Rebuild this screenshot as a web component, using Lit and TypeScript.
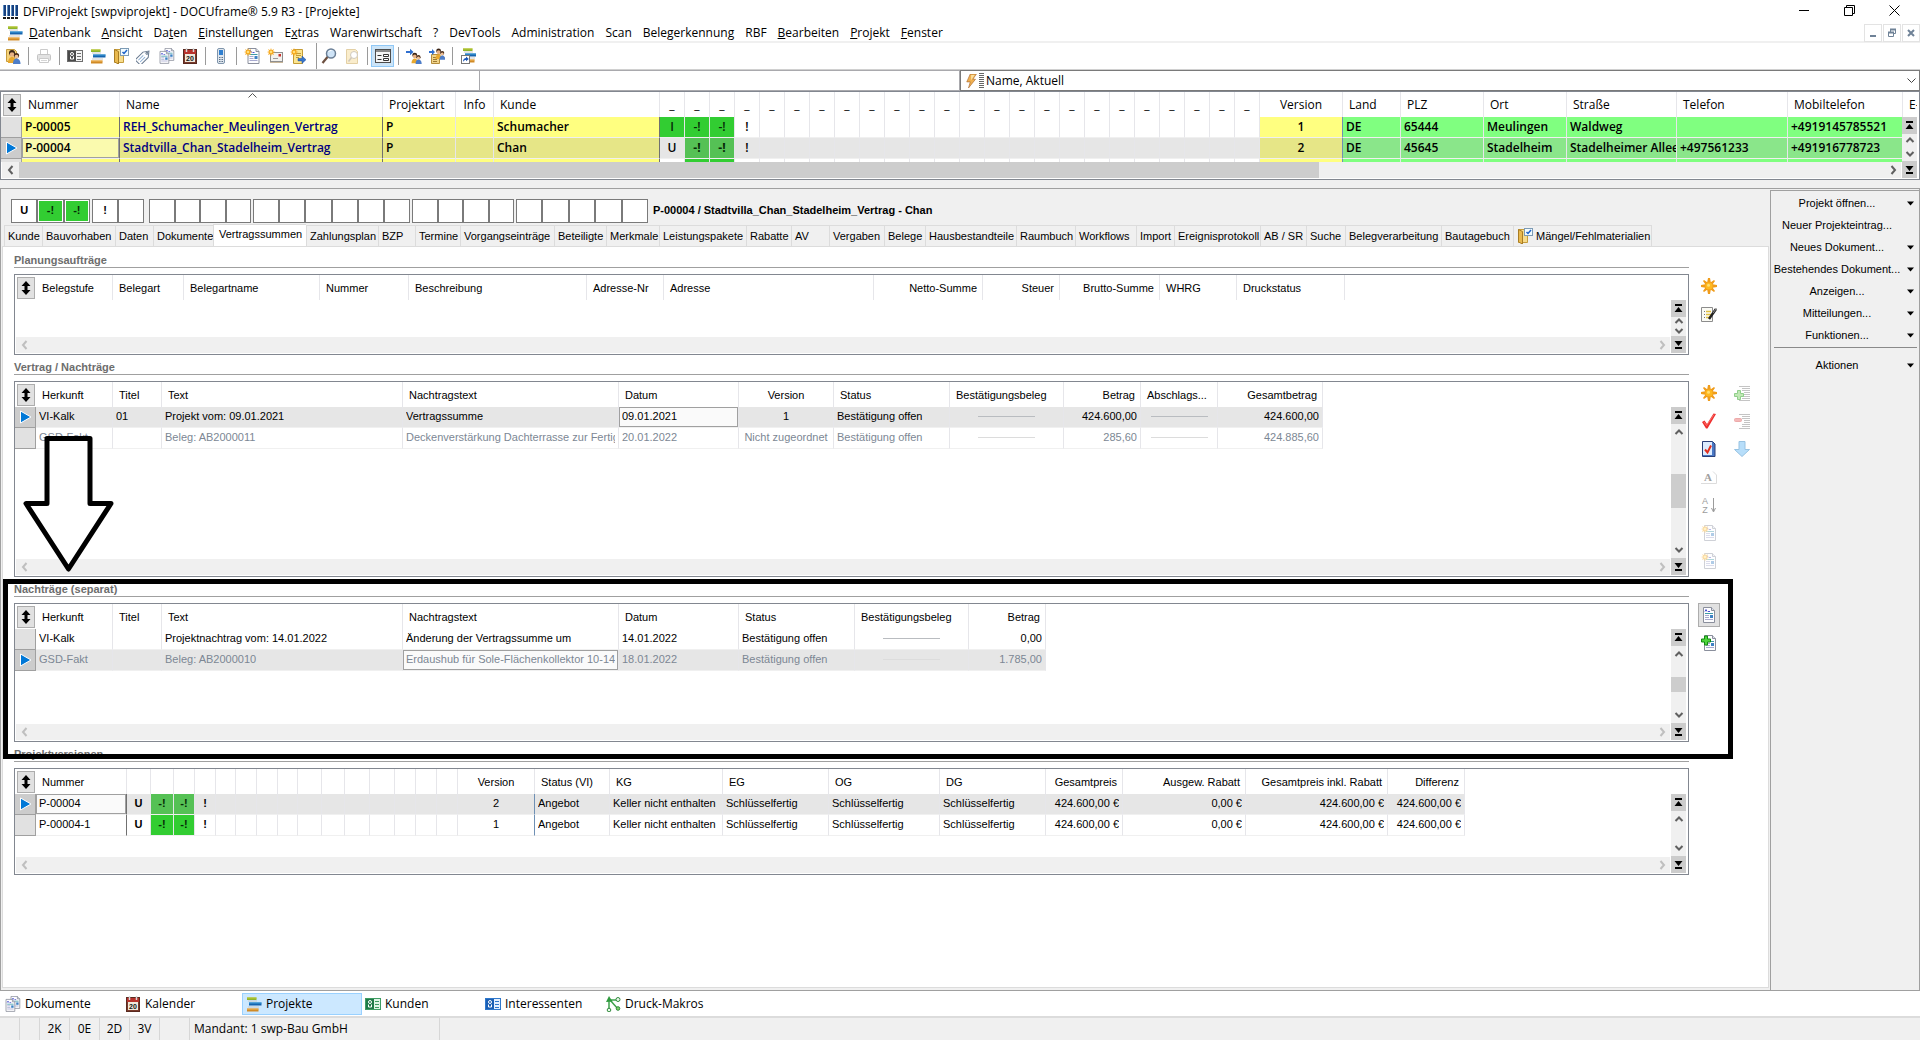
import { LitElement, html, svg, css, nothing, TemplateResult } from "lit";
import { customElement, property } from "lit/decorators.js";
import { classMap } from "lit/directives/class-map.js";

/* ---------- icons (16 x 16 grid) ---------- */

const sheet = svg`
  <path d="M2.500 .5h8l3 3v12h-11z" fill="#fdfdff" stroke="#8a8f9c"/>
  <path d="M10.500 .5v3h3" fill="#dfe3ee" stroke="#8a8f9c"/>
  <path d="M4 4.500l1-2 1 2M7 4.500h2" stroke="#4a4fd0" fill="none"/>
  <path d="M4 6.500h8" stroke="#3f9aa8"/><path d="M4 8.500h4M4 10.500h4M4 12.500h8" stroke="#a7a9cf"/>
  <rect x="9" y="8" width="3" height="3" fill="#3d82c4"/>`;
const smallStar = svg`<path d="M4 0l.8 2.200L7 1l-1 2.200L8.400 4 6 4.800 7 7 4.800 6 4 8.400 3.200 6 1 7l1-2.200L0 4l2.200-.8L1 1l2.200 1.200z" fill="#f7a81b"/><circle cx="4" cy="4" r="1.300" fill="#ffe07a"/>`;
const person = svg`
  <circle cx="7" cy="5" r="3" fill="#3a2416"/><circle cx="7" cy="6.500" r="2.300" fill="#e7b184"/>
  <path d="M3 15c0-4 2-6 4-6s4 2 4 6z" fill="#e9a92e"/>
  <circle cx="11.500" cy="7.500" r="2.600" fill="#4c2d18"/><circle cx="11.500" cy="8.700" r="1.900" fill="#f0c096"/>
  <path d="M8 16c0-4 1.700-5.500 3.500-5.500S15.500 12 15.500 16z" fill="#4d7dc8"/>`;
const bars = svg`
  <path d="M1 1.500h9.500v2.500H1z" fill="#8cb52c"/><path d="M1 1.500h9.500v1H1z" fill="#c2c832"/>
  <path d="M2 5h9" stroke="#c9c9c9"/><path d="M3 6.500h12.500v3H3z" fill="#1664ae"/><path d="M3 6.500h12.500v1H3z" fill="#3fa0dc"/>
  <path d="M2 11h11" stroke="#c9c9c9"/><path d="M1 12.500h11.500v3H1z" fill="#d08a26"/><path d="M1 12.500h11.500v1H1z" fill="#f2b95a"/>`;
const card = (bg: string, edge: string, left: string) => svg`
  <rect x=".5" y="2.500" width="15" height="11" fill=${bg} stroke=${edge}/>
  <rect x="1" y="3" width="8" height="10" fill=${left}/>
  <circle cx="5" cy="6" r="1.500" fill="none" stroke="#fff"/><path d="M3.500 8.500v2.500h3V8.500" fill="none" stroke="#fff"/>
  <path d="M10 5.500h4M10 8.500h4M10 11.500h4" stroke=${edge}/>`;
const lines = svg`<path d="M5 1.500h11M8 3.500h8M8 5.500h8M10 7.500h6M10 9.500h6M8 11.500h8M8 13.500h8M5 15.500h11" stroke="#c4c4c4"/>`;

const ICONS: Record<string, unknown> = {
  app: svg`<path d="M1 1h3v11H1zM5 1h3v11H5zM9 1h3v11H9zM13 1h3v11h-3z" fill="#17407e"/><path d="M1 1h1v11H1zM5 1h1v11H5zM9 1h1v11H9zM13 1h1v11h-1z" fill="#5f8fc4"/><path d="M1 13h3v2H1zM5 13h3v2H5zM9 13h3v2H9zM13 13h3v2h-3z" fill="#1c1c1c"/>`,
  bars,
  people: svg`<path d="M1.500 1.500h8l2 2v10h-10z" fill="#f5d27a" stroke="#c49a3c"/>${person}`,
  printer: svg`<g opacity=".6"><path d="M4.500 1.500h7v5h-7z" fill="#fff" stroke="#aaa"/><rect x="1.500" y="6.500" width="13" height="6" rx="1" fill="#cfcfcf" stroke="#9d9d9d"/><path d="M3.500 10.500h9v4h-9z" fill="#fff" stroke="#aaa"/><path d="M5 12.500h6" stroke="#bbb"/></g>`,
  card: card("#f4f4f4", "#6e6e6e", "#4a4a4a"),
  kunden: card("#dff5e6", "#3f9c63", "#1f7a48"),
  interessenten: card("#e4f0ff", "#2f78cc", "#1b5fb4"),
  folder: svg`<path d="M1.500 1.500h9v13h-9z" fill="#f7dc8c" stroke="#c59c3c"/><path d="M1.500 1.500l4 2v12.500l-4-2z" fill="#e9b94e" stroke="#a97d24"/><rect x="7.500" y=".5" width="8" height="7" fill="#f2fbff" stroke="#7d9bb5"/><path d="M9.500 4l1.500 1.500L14 2" fill="none" stroke="#1c62c8" stroke-width="1.500"/>`,
  tag: svg`<g transform="rotate(-45 8 8)" fill="#fff" stroke="#6a7b90"><path d="M-1 4.500h11l5 3.500-5 4H-1z"/><circle cx="12" cy="8.100" r="1"/><path d="M1 7h7M1 9.500h7" stroke="#8fb0d4"/></g>`,
  docs: svg`<g transform="translate(4 0) scale(.8)">${sheet}</g><g transform="translate(-1 3) scale(.8)">${sheet}</g>`,
  cal: svg`<rect x="1.500" y="1.500" width="13" height="14" fill="#7a3b2c" stroke="#5a2a20"/><rect x="2" y="2" width="12" height="4" fill="#b8322c"/><path d="M4.500 0v4M11.500 0v4" stroke="#d9d9d9" stroke-width="1.500"/><rect x="3" y="6" width="10" height="8" fill="#efe9dc"/><text x="8" y="13" font-size="7" font-weight="700" font-family="Liberation Sans, sans-serif" text-anchor="middle" fill="#111">20</text>`,
  phone: svg`<rect x="4.500" y=".5" width="7" height="15" rx="1.500" fill="#dfe6ee" stroke="#7f95ac"/><rect x="6" y="2" width="4" height="5" fill="#2f7fd0"/><path d="M6 9.500h1M7.500 9.500h1M9 9.500h1M6 11.500h1M7.500 11.500h1M9 11.500h1M6 13.500h1M7.500 13.500h1M9 13.500h1" stroke="#5d7288"/>`,
  newdoc: svg`<g transform="translate(1.500 0)">${sheet}</g>${smallStar}`,
  mail: svg`<rect x="3.500" y="4.500" width="12" height="9" fill="#f2f1ee" stroke="#8f8f8f"/><path d="M3 14.500h13" stroke="#c9b79a"/><rect x="11.500" y="6" width="2.500" height="2.500" fill="#c8322b"/><path d="M6 10.500h5" stroke="#9a9a9a"/>${smallStar}`,
  note: svg`<path d="M3.500 1.500h9v14h-9z" fill="#fbe591" stroke="#c59c35"/><path d="M6 5.500h5M6 7.500h5M6 9.500h3" stroke="#c59c35"/><path d="M8 10.500h4V8l4 3.700-4 3.700v-2.500H8z" fill="#3776cc" stroke="#1d4f9a" stroke-width=".5"/>${smallStar}`,
  find: svg`<circle cx="10" cy="5.500" r="4.500" fill="#cfe4f7" stroke="#6b7f96" stroke-width="1.500"/><path d="M7.500 4a3 3 0 0 1 3-1.500" stroke="#fff" fill="none"/><path d="M6.500 9L1.500 15" stroke="#6d5040" stroke-width="2.200"/>`,
  findfolder: svg`<g opacity=".5"><path d="M2.500 1.500h9l2 2v12h-11z" fill="#f7dc9a" stroke="#c9a24e"/><circle cx="10" cy="7" r="3.500" fill="#fff" stroke="#a3957c"/><path d="M7.500 9.500l-3 4" stroke="#a3957c" stroke-width="1.500"/></g>`,
  form: svg`<rect x=".5" y="1.500" width="15" height="13" fill="#f5f5f5" stroke="#4d4d4d"/><path d="M1 3h14" stroke="#8a8a8a" stroke-width="2"/><path d="M2.500 7.500h4M2.500 11.500h4" stroke="#333"/><path d="M8.500 6.500h5v2h-5zM8.500 10.500h5v2h-5z" fill="#fff" stroke="#333"/>`,
  persons: svg`<g transform="translate(3 3) scale(.82)">${person}</g><path d="M0 3h4V.8L7.500 4 4 7.200V5H0z" fill="#2f6fd0"/>`,
  persons2: svg`<path d="M2.500 6.500h8v9h-8z" fill="#f1d48a" stroke="#b58d3c"/><path d="M4 9.500h4M4 11.500h4M4 13.500h4" stroke="#9d7a33"/><g transform="translate(4 -1) scale(.8)">${person}</g><path d="M0 3h3V1l3 3-3 3V5H0z" fill="#2f6fd0"/>`,
  shortcut: svg`<g transform="translate(2 -1)">${bars}</g><rect x="1.500" y="7.500" width="8" height="8" fill="#fff" stroke="#777"/><path d="M3 14c0-3 1.500-4 3-4V8.500L8.800 11 6 13.300V12c-1.500 0-2 .5-3 2z" fill="#1a57b8"/>`,
  bolt: svg`<path d="M6 0h7L9 6h3L4 16l2-7H2z" fill="#f0b050" stroke="#a4622a" stroke-width=".7"/><path d="M7 1h4L7 7z" fill="#fbe1a0"/>`,
  star: svg`<path d="M7 0h2l.8 4.300L13 2l1 1-2.300 3.200L16 7v2l-4.300.8L14 13l-1 1-3.200-2.300L9 16H7l-.8-4.300L3 14l-1-1 2.300-3.200L0 9V7l4.300-.8L2 3l1-1 3.200 2.300z" fill="#f09c1a"/><circle cx="8" cy="8" r="3.600" fill="#ffb91f"/><circle cx="7.500" cy="7.300" r="1.500" fill="#ffdf70"/>`,
  edit: svg`<path d="M.5 1.500h11v14H.5z" fill="#fbfbf5" stroke="#8c8c8c"/><path d="M3 5.500h1M3 8.500h1M3 11.500h1" stroke="#777"/><path d="M5 5.500h5M5 8.500h5M5 11.500h4" stroke="#e2c040" stroke-width="1.500"/><path d="M15 3L8 13" stroke="#222" stroke-width="2.500"/><path d="M15.500 2.300L12 7" stroke="#8b8b8b"/>`,
  check: svg`<path d="M1 9l2.500-1.500L6 11 12.500.5 15 1 6.500 15.500H5z" fill="#ee2f2f"/><path d="M3 9l2.500 3.500L13 1.500" stroke="#ff8a80" fill="none" stroke-width=".7"/>`,
  doccheck: svg`<path d="M1.500 .5h10l2.500 2.500v12.500H1.500z" fill="#4a78c4" stroke="#2a3f78"/><path d="M2 1h9v13H2z" fill="#dcecff"/><path d="M4 8.500l2.500 3L10 4.500" stroke="#e2301f" stroke-width="2" fill="none"/>`,
  adoc: svg`<path d="M0 14.500h15.500V6L12 2.500" fill="none" stroke="#dcdcdc"/><text x="7" y="12" font-size="11" font-weight="700" font-family="Liberation Serif, serif" text-anchor="middle" fill="#a0a0a0">A</text>`,
  az: svg`<text x="4" y="7" font-size="9" font-family="Liberation Sans, sans-serif" text-anchor="middle" fill="#9c9c9c">A</text><text x="4" y="16" font-size="9" font-family="Liberation Sans, sans-serif" text-anchor="middle" fill="#9c9c9c">Z</text><path d="M12.500 1v13M10.500 11l2 4 2-4" fill="none" stroke="#9c9c9c"/>`,
  faded: svg`<g opacity=".4"><g transform="translate(1 0)">${sheet}</g>${smallStar}</g>`,
  listplus: svg`${lines}<path d="M3.500 7.500h3v3h3v3h-3v3h-3v-3h-3v-3h3z" transform="translate(0 -2)" fill="#c0e8b4" stroke="#8fcf8a"/>`,
  listminus: svg`${lines}<rect x=".5" y="5.500" width="7" height="3" rx="1" fill="#f4b8b8" stroke="#ecaaaa"/>`,
  down: svg`<path d="M5 .5h6v8h4.500L8 15.500.5 8.500H5z" fill="#b7defa" stroke="#97c2e2"/>`,
  doc: svg`${sheet}`,
  docplus: svg`<g transform="translate(1 0)">${sheet}</g><path d="M3.500 1h3v3h3v3h-3v3h-3V7h-3V4h3z" fill="#4fd43c" stroke="#128a12"/>`,
  makros: svg`<path d="M4 5v9M5 4l8 9M5.500 4H13" stroke="#3fa34d" stroke-width="1.500" fill="none"/><path d="M1 6l3-6 3.500 5.500z" fill="#2f9a3e"/><circle cx="13" cy="3.500" r="2" fill="#e9f7ea" stroke="#2f8a3c"/><circle cx="4" cy="14" r="1.800" fill="#e9f7ea" stroke="#2f8a3c"/><circle cx="13" cy="12.500" r="1.800" fill="#7fcf6a" stroke="#2f8a3c"/>`,
};

const icon = (name: string, size = 16) =>
  html`<svg class="ico" width=${size} height=${size} viewBox="0 0 16 16" aria-hidden="true">${ICONS[name]}</svg>`;

const chevron = (dir: "up" | "down" | "left" | "right") => {
  const d = {
    up: "M1.500 6L5 2.500 8.500 6",
    down: "M1.500 3L5 6.500 8.500 3",
    left: "M6.500 1L3 5l3.500 4",
    right: "M3.500 1L7 5 3.500 9",
  }[dir];
  return html`<svg width="10" height="10" viewBox="0 0 10 10" aria-hidden="true"><path d=${d} fill="none" stroke="currentColor" stroke-width="2"/></svg>`;
};

/* ---------- data grid ---------- */

interface Col {
  w: number;
  t?: string;
  align?: "r" | "c";
  edge?: "dark" | "blue";
  sorted?: boolean;
}
interface Cell {
  t?: string;
  c?: string;
  line?: boolean;
}
interface Row {
  current?: boolean;
  muted?: boolean;
  focus?: number;
  cells: (string | Cell)[];
}

@customElement("df-grid")
export class DfGrid extends LitElement {
  @property({ attribute: false }) cols: Col[] = [];
  @property({ attribute: false }) rows: Row[] = [];
  @property() label = "";
  @property({ type: Boolean }) thumb = false;
  @property({ type: Boolean, reflect: true }) main = false;

  static styles = css`
    :host {
      display: grid;
      grid-template-columns: minmax(0, 1fr) 15px;
      grid-template-rows: 25px minmax(0, 1fr) 16px;
      column-gap: 1px;
      padding: 0 2px 1px 0;
      box-sizing: border-box;
      border: 1px solid #828790;
      background: #fff;
      overflow: hidden;
      font: 11px/14px "Liberation Sans", Arial, sans-serif;
      color: #000;
    }
    :host([main]) {
      font: 12px/16px "Open Sans", "Noto Sans", sans-serif;
    }
    .view { grid-area: 1 / 1 / 3 / 3; overflow: hidden; }
    table { table-layout: fixed; border-collapse: separate; border-spacing: 0; }
    th, td {
      box-sizing: border-box;
      padding: 0 3px;
      overflow: hidden;
      white-space: nowrap;
      text-align: left;
      border-right: 1px solid #e6e6ea;
    }
    th { height: 25px; padding: 0 6px; font-weight: 400; }
    td { height: 21px; padding-bottom: 2px; border-bottom: 1px solid #f0f0f0; }
    :host([main]) td { padding-bottom: 0; font-weight: 600; }
    th:first-child { padding: 1px 1px 0 2px; border-right: 0; }
    td:first-child {
      padding: 0;
      background: #e1e1e1;
      border-right: 1px solid #a0a0a0;
      border-bottom: 1px solid #a0a0a0;
    }
    .r { text-align: right; }
    th.r { padding-right: 5px; }
    .c { text-align: center; padding-left: 0; padding-right: 0; }
    td.dark { border-right-color: #707070; }
    td.blue { border-right-color: #6f90b4; }
    .current td { background: #e6e6e6; }
    .current td:first-child { background: #ccc; }
    .muted td { color: #7c8794; }
    td.green, .current td.green { background: #32cd32; font-weight: 700; color: #062806; }
    .current td.green { background: #55c155; }
    td.bold { font-weight: 700; }
    .val { display: block; overflow: hidden; }
    :host([main]) .val { overflow: visible; }
    .sum { display: block; width: 57px; height: 1px; margin: 0 auto; background: #b9bcc0; }
    .muted .sum { background: #dcdcdc; }
    td.yel { background: #ffff80; }
    .current td.yel { background: #e6e687; }
    td.navy { color: #000080; }
    td.lime { background: #80ff80; }
    .current td.lime { background: #8ae68a; }
    .current td.focus { background: #fafafa; box-shadow: inset 0 0 0 1px #a0a0a0; }
    .current td.focus.yel { background: #fafaae; }
    .sortbtn {
      display: flex;
      align-items: center;
      justify-content: center;
      width: 18px;
      height: 22px;
      padding: 0;
      border: 1px solid #adadad;
      background: #e1e1e1;
    }
    .mark { display: block; margin: 0 auto; }
    .head { position: relative; overflow: visible; }
    .sortmark { position: absolute; top: 1px; left: 49%; }

    .hbar { grid-area: 3 / 1; display: flex; background: #f0f0f0; margin-left: 1px; }
    .vbar { grid-area: 2 / 2 / 4 / 3; display: flex; flex-direction: column; background: #f0f0f0; }
    .sb {
      display: flex;
      align-items: center;
      justify-content: center;
      flex: 0 0 17px;
      padding: 0;
      border: 0;
      background: transparent;
      color: #bfbfbf;
      overflow: hidden;
    }
    .vbar .sb { color: #606060; flex: 0 1 17px; min-height: 0; }
    .vbar .end { background: #ccc; color: #000; flex: 0 0 17px; }
    .track { flex: 1; display: grid; grid-template-columns: 23fr 10fr; min-height: 0; }
    .hthumb { background: #cdcdcd; }
    .vtrack { flex: 1 1 0; min-height: 0; display: grid; grid-template-rows: 1fr 1fr 1fr; }
    .vthumb { grid-row: 2; background: #cdcdcd; }
    :host([main]) .hbar .sb { color: #606060; }
  `;

  private cell(v: string | Cell, i: number, row: Row): TemplateResult {
    const cell: Cell = typeof v === "string" ? { t: v } : v;
    const col = this.cols[i];
    const cls = [cell.c, col.align, col.edge, row.focus === i ? "focus" : ""].filter(Boolean).join(" ");
    return html`<td class=${cls}>${cell.line ? html`<span class="sum"></span>` : html`<span class="val">${cell.t}</span>`}</td>`;
  }

  render() {
    const total = 21 + this.cols.reduce((s, c) => s + c.w, 0);
    return html`
      <div class="view">
        <table aria-label=${this.label} style="width:${total}px">
          <colgroup>
            <col style="width:21px" />
            ${this.cols.map((c) => html`<col style="width:${c.w}px" />`)}
          </colgroup>
          <thead>
            <tr>
              <th>
                <button class="sortbtn" aria-label="Sortierung">
                  <svg width="10" height="14" viewBox="0 0 10 14"><path d="M5 0l4.500 5H6.500v4h3L5 14 .5 9h3V5h-3z" fill="#000"/></svg>
                </button>
              </th>
              ${this.cols.map(
                (c) => html`<th class=${classMap({ r: c.align === "r", c: c.align === "c", head: !!c.sorted })}>${c.t ?? ""}${c.sorted
                  ? html`<svg class="sortmark" width="9" height="5" viewBox="0 0 9 5"><path d="M.5 4.500l4-4 4 4" fill="none" stroke="#555"/></svg>`
                  : nothing}</th>`
              )}
            </tr>
          </thead>
          <tbody>
            ${this.rows.map(
              (r) => html`<tr class=${classMap({ current: !!r.current, muted: !!r.muted })}>
                <td>${r.current
                  ? html`<svg class="mark" width="14" height="16" viewBox="0 0 14 16"><path d="M2.500 2v12L13 8z" fill="#0078d7" stroke="#fff"/></svg>`
                  : nothing}</td>
                ${r.cells.map((v, i) => this.cell(v, i, r))}
              </tr>`
            )}
          </tbody>
        </table>
      </div>
      <div class="hbar">
        <button class="sb" aria-label="Nach links">${chevron("left")}</button>
        <div class="track">${this.main ? html`<div class="hthumb"></div>` : nothing}</div>
        <button class="sb" aria-label="Nach rechts">${chevron("right")}</button>
      </div>
      <div class="vbar">
        <button class="sb end" aria-label="Zum Anfang">
          <svg width="9" height="9" viewBox="0 0 9 9"><path d="M1 0h7v2H1zM4.500 3L8.500 8h-8z"/></svg>
        </button>
        <button class="sb" aria-label="Nach oben">${chevron("up")}</button>
        <div class="vtrack">${this.thumb ? html`<div class="vthumb"></div>` : nothing}</div>
        <button class="sb" aria-label="Nach unten">${chevron("down")}</button>
        <button class="sb end" aria-label="Zum Ende">
          <svg width="9" height="9" viewBox="0 0 9 9"><path d="M1 7h7v2H1zM4.500 6L8.500 1h-8z"/></svg>
        </button>
      </div>
    `;
  }
}

/* ---------- data ---------- */

const flags = (n: number, c?: string): Cell[] => Array.from({ length: n }, () => ({ c }));
const y = (t: string, extra = ""): Cell => ({ t, c: "yel " + extra });
const l = (t: string): Cell => ({ t, c: "lime" });
const go: Cell = { t: "-!", c: "green" };
const b = (t: string): Cell => ({ t, c: "bold" });

const topCols: Col[] = [
  { t: "Nummer", w: 98, edge: "dark" },
  { t: "Name", w: 263, edge: "dark", sorted: true },
  { t: "Projektart", w: 73 },
  { t: "Info", w: 38, align: "c" },
  { t: "Kunde", w: 166, edge: "dark" },
  ...Array.from({ length: 24 }, (): Col => ({ t: "_", w: 25, align: "c" })),
  { t: "Version", w: 83, align: "c", edge: "blue" },
  { t: "Land", w: 58 },
  { t: "PLZ", w: 83 },
  { t: "Ort", w: 83 },
  { t: "Straße", w: 110 },
  { t: "Telefon", w: 111 },
  { t: "Mobiltelefon", w: 115 },
  { t: "E-", w: 40 },
];
const topRows: Row[] = [
  {
    cells: [
      y("P-00005"), y("REH_Schumacher_Meulingen_Vertrag", "navy"), y("P"), y(""), y("Schumacher"),
      { t: "I", c: "green" }, go, go, b("!"), ...flags(20),
      y("1"), l("DE"), l("65444"), l("Meulingen"), l("Waldweg"), l(""), l("+4919145785521"), l(""),
    ],
  },
  {
    current: true,
    focus: 0,
    cells: [
      y("P-00004"), y("Stadtvilla_Chan_Stadelheim_Vertrag", "navy"), y("P"), y(""), y("Chan"),
      b("U"), go, go, b("!"), ...flags(20),
      y("2"), l("DE"), l("45645"), l("Stadelheim"), l("Stadelheimer Allee"), l("+497561233"), l("+491916778723"), l(""),
    ],
  },
  {
    cells: [
      y(""), y(""), y(""), y(""), y(""), { t: "" }, { c: "green" }, { c: "green" }, { t: "" }, ...flags(20),
      y(""), l(""), l(""), l(""), l(""), l(""), l(""), l(""),
    ],
  },
];

const planCols: Col[] = [
  { t: "Belegstufe", w: 77 }, { t: "Belegart", w: 71 }, { t: "Belegartname", w: 136 }, { t: "Nummer", w: 89 },
  { t: "Beschreibung", w: 178 }, { t: "Adresse-Nr", w: 77 }, { t: "Adresse", w: 210 },
  { t: "Netto-Summe", w: 109, align: "r" }, { t: "Steuer", w: 77, align: "r" },
  { t: "Brutto-Summe", w: 100, align: "r" }, { t: "WHRG", w: 77 }, { t: "Druckstatus", w: 108 },
];

const vertragCols: Col[] = [
  { t: "Herkunft", w: 77 }, { t: "Titel", w: 49 }, { t: "Text", w: 241 }, { t: "Nachtragstext", w: 216 },
  { t: "Datum", w: 120 }, { t: "Version", w: 95, align: "c" }, { t: "Status", w: 116 },
  { t: "Bestätigungsbeleg", w: 114 }, { t: "Betrag", w: 77, align: "r" }, { t: "Abschlags...", w: 77 },
  { t: "Gesamtbetrag", w: 105, align: "r" },
];
const vertragRows: Row[] = [
  {
    current: true,
    focus: 4,
    cells: ["VI-Kalk", "01", "Projekt vom: 09.01.2021", "Vertragssumme", "09.01.2021", "1", "Bestätigung offen", { line: true }, "424.600,00", { line: true }, "424.600,00"],
  },
  {
    muted: true,
    cells: ["GSD-Fakt", "", "Beleg: AB2000011", "Deckenverstärkung Dachterrasse zur Fertig", "20.01.2022", "Nicht zugeordnet", "Bestätigung offen", { line: true }, "285,60", { line: true }, "424.885,60"],
  },
];

const nachtragCols: Col[] = [
  ...vertragCols.slice(0, 5),
  { t: "Status", w: 116 }, { t: "Bestätigungsbeleg", w: 114 }, { t: "Betrag", w: 77, align: "r" },
];
const nachtragRows: Row[] = [
  { cells: ["VI-Kalk", "", "Projektnachtrag vom: 14.01.2022", "Änderung der Vertragssumme um", "14.01.2022", "Bestätigung offen", { line: true }, "0,00"] },
  {
    current: true,
    muted: true,
    focus: 3,
    cells: ["GSD-Fakt", "", "Beleg: AB2000010", "Erdaushub für Sole-Flächenkollektor 10-14", "18.01.2022", "Bestätigung offen", { line: true }, "1.785,00"],
  },
];

const versionCols: Col[] = [
  { t: "Nummer", w: 91, edge: "dark" },
  ...[24, 23, 21, 21, 20, 21, 21, 20, 24, 23, 25, 25, 21, 21, 21].map((w): Col => ({ w, align: "c" })),
  { t: "Version", w: 77, align: "c", edge: "blue" }, { t: "Status (VI)", w: 75 }, { t: "KG", w: 113 },
  { t: "EG", w: 106 }, { t: "OG", w: 111 }, { t: "DG", w: 106 }, { t: "Gesamtpreis", w: 77, align: "r" },
  { t: "Ausgew. Rabatt", w: 123, align: "r" }, { t: "Gesamtpreis inkl. Rabatt", w: 142, align: "r" },
  { t: "Differenz", w: 77, align: "r" },
];
const versionRow = (nr: string, v: string, extra: Partial<Row> = {}): Row => ({
  ...extra,
  cells: [
    nr, b("U"), go, go, b("!"), ...flags(11), v, "Angebot", "Keller nicht enthalten",
    "Schlüsselfertig", "Schlüsselfertig", "Schlüsselfertig", "424.600,00 €", "0,00 €", "424.600,00 €", "424.600,00 €",
  ],
});
const versionRows: Row[] = [
  versionRow("P-00004", "2", { current: true, focus: 0 }),
  versionRow("P-00004-1", "1"),
];

const menus: [string, string, string][] = [
  ["", "D", "atenbank"], ["", "A", "nsicht"], ["Da", "t", "en"], ["", "E", "instellungen"], ["E", "x", "tras"],
  ["Warenwirtschaft", "", ""], ["?", "", ""], ["DevTools", "", ""], ["Administration", "", ""], ["Scan", "", ""],
  ["Belegerkennung", "", ""], ["RBF", "", ""], ["", "B", "earbeiten"], ["", "P", "rojekt"], ["", "F", "enster"],
];

const tools: [string, string][] = [
  ["people", "Benutzer"], ["|", ""], ["printer", "Drucken"], ["|", ""], ["card", "Adressen"], ["bars", "Projekte"],
  ["folder", "Aufgaben"], ["tag", "Artikel"], ["docs", "Dokumente"], ["cal", "Kalender"], ["|", ""],
  ["phone", "Telefon"], ["|", ""], ["newdoc", "Neues Dokument"], ["mail", "Neue Mail"], ["note", "Neue Notiz"],
  ["||", ""], ["find", "Suchen"], ["findfolder", "Ordner durchsuchen"], ["|", ""], ["form", "Formularansicht"],
  ["|", ""], ["persons", "Zuordnen"], ["persons2", "Zuordnung kopieren"], ["|", ""], ["shortcut", "Projektverknüpfung"],
];

const tabs: [string, number][] = [
  ["Kunde", 38], ["Bauvorhaben", 73], ["Daten", 38], ["Dokumente", 60], ["Vertragssummen", 93], ["Zahlungsplan", 72],
  ["BZP", 37], ["Termine", 45], ["Vorgangseinträge", 94], ["Beteiligte", 52], ["Merkmale", 53], ["Leistungspakete", 87],
  ["Rabatte", 45], ["AV", 38], ["Vergaben", 55], ["Belege", 41], ["Hausbestandteile", 91], ["Raumbuch", 59],
  ["Workflows", 61], ["Import", 38], ["Ereignisprotokoll", 86], ["AB / SR", 46], ["Suche", 39],
  ["Belegverarbeitung", 96], ["Bautagebuch", 72], ["Mängel/Fehlmaterialien", 139],
];

const chipGroups: [number, string[]][] = [
  [79, ["U", "-!", "-!"]], [52, ["!", ""]], [102, ["", "", "", ""]], [157, ["", "", "", "", "", ""]],
  [102, ["", "", "", ""]], [132, ["", "", "", "", ""]],
];

const actions: [string, boolean][] = [
  ["Projekt öffnen...", true], ["Neuer Projekteintrag...", false], ["Neues Dokument...", true],
  ["Bestehendes Dokument...", true], ["Anzeigen...", true], ["Mitteilungen...", true], ["Funktionen...", true],
];

const areas: [string, string][] = [
  ["docs", "Dokumente"], ["cal", "Kalender"], ["bars", "Projekte"], ["kunden", "Kunden"],
  ["interessenten", "Interessenten"], ["makros", "Druck-Makros"],
];

/* ---------- application window ---------- */

@customElement("app-root")
export class AppRoot extends LitElement {
  static styles = css`
    :host {
      display: flex;
      flex-direction: column;
      min-height: 100vh;
      background: #fff;
      color: #000;
      overflow: hidden;
      font: 12px/16px "Open Sans", "Noto Sans", sans-serif;
    }
    button, input, select { font: inherit; color: inherit; }
    button { padding: 0; border: 0; background: transparent; white-space: nowrap; }
    .ico { display: block; flex: none; }

    .title { display: flex; align-items: center; height: 24px; padding-left: 2px; }
    .title .name { margin: 0 auto 0 5px; font: inherit; }
    .win { width: 45px; height: 20px; display: flex; align-items: center; justify-content: center; align-self: flex-start; }
    .win:last-child { margin-right: 3px; }

    .menu { display: flex; align-items: center; height: 17px; border-bottom: 2px solid #f0f0f0; padding-left: 7px; }
    .menu nav { display: flex; gap: 11px; margin: 0 auto 0 6px; }
    .mdi { width: 18px; height: 18px; margin-left: 1px; border: 1px solid #e3e3e3; display: flex; align-items: center; justify-content: center; box-sizing: border-box; }

    .tools { display: flex; align-items: center; height: 26px; padding-left: 1px; border-bottom: 1px solid #d0d0d0; }
    .tool { width: 23px; height: 22px; display: flex; align-items: center; justify-content: center; box-sizing: border-box; }
    .tool.on { background: #cce4f7; border: 1px solid #90c8f6; }
    .sep { width: 8px; height: 18px; display: flex; justify-content: center; }
    .sep::before { content: ""; width: 1px; background: #9a9a9a; }
    .sep.full { height: 26px; justify-content: flex-end; }

    .filter { display: grid; grid-template-columns: 1fr 1fr 2fr; height: 21px; }
    .field { box-sizing: border-box; min-width: 0; height: 21px; border: 1px solid #a9a9ad; border-left: 0; background: #fff; padding: 0 4px; outline: none; }
    .pick { display: flex; align-items: center; border: 1px solid #7a7a7a; padding: 0 3px 0 4px; box-sizing: border-box; }
    .pick select { flex: 1; appearance: none; border: 0; background: transparent; padding: 0 0 0 2px; }
    .ruler { width: 5px; height: 15px; background: repeating-linear-gradient(#666 0 1px, #fff 1px 2px); }

    .projects { height: 89px; }
    .gap { height: 8px; background: #f0f0f0; }
    .work { flex: 1; display: flex; background: #f0f0f0; border: 1px solid #a0a0a0; padding-top: 1px; }
    .work, .work button { font: 11px/14px "Liberation Sans", Arial, sans-serif; }
    .detail { flex: 1; min-width: 0; display: flex; flex-direction: column; padding: 9px 1px 2px 1px; }

    .chips { display: flex; align-items: center; gap: 2px; padding-left: 9px; }
    .group { display: flex; }
    .group:nth-child(2) { margin-right: 3px; }
    .chip { flex: 1; height: 24px; box-sizing: border-box; border: 1px solid #7a7a7a; background: #fff; font-weight: 700; display: flex; align-items: center; justify-content: center; padding-bottom: 2px; }
    .chip.green { background: #32cd32; box-shadow: inset 0 0 0 1px #fff; color: #062806; }
    .caption { margin: 0 0 0 3px; padding-bottom: 2px; font: inherit; font-weight: 700; }

    .tabs { display: flex; align-items: flex-end; height: 23px; padding-left: 2px; }
    .tab { flex: none; height: 21px; box-sizing: border-box; border: 1px solid #dcdcdc; border-width: 1px 0 0 1px; padding: 0 0 1px 3px; text-align: left; display: flex; align-items: center; gap: 3px; overflow: hidden; }
    .tab:last-child { border-right-width: 1px; }
    .tab.on { height: 23px; margin-bottom: -1px; background: #fff; padding: 0 0 4px 5px; }
    .pane { flex: 1; background: #fff; border: 1px solid #dcdcdc; padding: 6px 0 0 11px; display: flex; flex-direction: column; gap: 5px; }

    .section { display: grid; grid-template-columns: minmax(0, 1fr) 79px; grid-template-rows: 21px auto; position: relative; }
    .legend { grid-area: 1 / 1; margin: 0 0 6px; height: 14px; font: inherit; font-weight: 700; color: #6d6d6d; border-bottom: 1px solid #a0a0a0; }
    .list { grid-area: 2 / 1; }
    .h1 { height: 81px; }
    .h2 { height: 196px; }
    .h3 { height: 139px; }
    .h4 { height: 107px; }
    .side { grid-area: 2 / 2; padding: 0 0 0 9px; display: flex; gap: 11px; }
    .stack { display: flex; flex-direction: column; gap: 4px; }
    .act { width: 22px; height: 24px; display: flex; align-items: center; justify-content: center; box-sizing: border-box; }
    .act.on { background: #e1e1e1; border: 1px solid #adadad; }
    .marker { position: absolute; inset: -3px 35px -17px -11px; border: 5px solid #000; pointer-events: none; z-index: 2; }
    .pointer { position: absolute; left: 8px; top: 73px; pointer-events: none; z-index: 2; }

    .actions { flex: none; width: 149px; box-sizing: border-box; border-left: 1px solid #a0a0a0; border-top: 1px solid #a0a0a0; padding: 1px 0 0 2px; }
    .action { display: flex; align-items: center; width: 100%; height: 22px; }
    .action .txt { flex: 1; text-align: center; }
    .arrow { width: 18px; display: flex; justify-content: center; }
    .rule { height: 1px; border: 0; margin: 1px 2px 6px 1px; background: #8a8a8a; }

    .areas { display: flex; height: 25px; padding-left: 2px; align-items: center; border-bottom: 2px solid #dcdcdc; }
    .area { width: 120px; height: 22px; display: flex; align-items: center; gap: 4px; box-sizing: border-box; padding-left: 3px; }
    .area.on { background: #cce8ff; border: 1px solid #99d1ff; }
    .status { display: flex; height: 22px; background: #f0f0f0; align-items: stretch; }
    .stat { width: 30px; box-sizing: border-box; border-right: 1px solid #d7d7d7; display: flex; align-items: center; justify-content: center; }
    .stat.s { width: 20px; }
    .stat.l { width: 250px; justify-content: flex-start; padding-left: 4px; }
  `;

  private side(...stacks: [string, string, boolean?][][]) {
    return html`<div class="side">
      ${stacks.map(
        (s) => html`<div class="stack">
          ${s.map(([i, t, on]) => html`<button class=${classMap({ act: true, on: !!on })} aria-label=${t}>${icon(i)}</button>`)}
        </div>`
      )}
    </div>`;
  }

  render() {
    return html`
      <header class="title">
        ${icon("app")}
        <h1 class="name">DFViProjekt [swpviprojekt] - DOCUframe® 5.9 R3 - [Projekte]</h1>
        <button class="win" aria-label="Minimieren"><svg width="11" height="11" viewBox="0 0 11 11"><path d="M0 5.500h10" stroke="#000"/></svg></button>
        <button class="win" aria-label="Wiederherstellen"><svg width="11" height="11" viewBox="0 0 11 11"><path d="M.5 2.500h8v8h-8zM2.500 2.500v-2h8v8h-2" fill="none" stroke="#000"/></svg></button>
        <button class="win" aria-label="Schließen"><svg width="11" height="11" viewBox="0 0 11 11"><path d="M.5.5l10 10M10.500.5l-10 10" stroke="#000"/></svg></button>
      </header>

      <div class="menu">
        ${icon("bars")}
        <nav>${menus.map(([a, u, z]) => html`<button>${a}${u ? html`<u>${u}</u>` : nothing}${z}</button>`)}</nav>
        <button class="mdi" aria-label="Fenster minimieren"><svg width="10" height="10"><path d="M2 8h6" stroke="#6f8297" stroke-width="2"/></svg></button>
        <button class="mdi" aria-label="Fenster wiederherstellen"><svg width="10" height="10"><path d="M1.500 4.500h5v4h-5zM3.500 4V1.500h5v4H7" fill="none" stroke="#6f8297"/><path d="M1 4.500h6M3 1.500h6" stroke="#6f8297" stroke-width="2"/></svg></button>
        <button class="mdi" aria-label="Fenster schließen"><svg width="10" height="10"><path d="M2 2l6 6M8 2L2 8" stroke="#6f8297" stroke-width="2"/></svg></button>
      </div>

      <div class="tools">
        ${tools.map(([n, t]) =>
          n[0] === "|"
            ? html`<span class=${classMap({ sep: true, full: n === "||" })}></span>`
            : html`<button class=${classMap({ tool: true, on: n === "form" })} aria-label=${t}>${icon(n)}</button>`
        )}
      </div>

      <div class="filter">
        <input class="field" aria-label="Filter" />
        <input class="field" aria-label="Suche" />
        <div class="pick">
          ${icon("bolt", 14)}<span class="ruler"></span>
          <select aria-label="Sortierung"><option>Name, Aktuell</option></select>
          <svg width="9" height="6" viewBox="0 0 9 6"><path d="M.5 .5l4 4 4-4" fill="none" stroke="#444"/></svg>
        </div>
      </div>

      <df-grid class="projects" main label="Projekte" .cols=${topCols} .rows=${topRows}></df-grid>
      <div class="gap"></div>

      <main class="work">
        <div class="detail">
          <div class="chips">
            ${chipGroups.map(
              ([w, cs]) => html`<div class="group" style="width:${w}px">
                ${cs.map((c) => html`<span class=${classMap({ chip: true, green: c === "-!" })}>${c}</span>`)}
              </div>`
            )}
            <h2 class="caption">P-00004 / Stadtvilla_Chan_Stadelheim_Vertrag - Chan</h2>
          </div>
          <div class="tabs" role="tablist">
            ${tabs.map(
              ([t, w]) => html`<button role="tab" aria-selected=${t === "Vertragssummen"}
                class=${classMap({ tab: true, on: t === "Vertragssummen" })} style="width:${w}px">${t.startsWith("Mängel") ? icon("folder") : nothing}${t}</button>`
            )}
          </div>
          <div class="pane">
            <section class="section">
              <h3 class="legend">Planungsaufträge</h3>
              <df-grid class="list h1" label="Planungsaufträge" .cols=${planCols} .rows=${[]}></df-grid>
              ${this.side([["star", "Neu"], ["edit", "Bearbeiten"]])}
            </section>
            <section class="section">
              <h3 class="legend">Vertrag / Nachträge</h3>
              <df-grid class="list h2" thumb label="Vertrag / Nachträge" .cols=${vertragCols} .rows=${vertragRows}></df-grid>
              ${this.side(
                [["star", "Neu"], ["check", "Bestätigen"], ["doccheck", "Beleg bestätigen"], ["adoc", "Text"], ["az", "Sortieren"], ["faded", "Neuer Beleg"], ["faded", "Neues Dokument"]],
                [["listplus", "Zeile hinzufügen"], ["listminus", "Zeile entfernen"], ["down", "Nach unten verschieben"]]
              )}
              <svg class="pointer" width="94" height="142" viewBox="0 0 94 142" aria-hidden="true">
                <path d="M25 5.500h43v65h21L46.500 136 4 70.500h21z" fill="#fff" stroke="#000" stroke-width="5" stroke-linejoin="round"/>
              </svg>
            </section>
            <section class="section">
              <h3 class="legend">Nachträge (separat)</h3>
              <df-grid class="list h3" thumb label="Nachträge (separat)" .cols=${nachtragCols} .rows=${nachtragRows}></df-grid>
              ${this.side([["doc", "Beleg anzeigen", true], ["docplus", "Beleg hinzufügen"]])}
              <div class="marker"></div>
            </section>
            <section class="section">
              <h3 class="legend">Projektversionen</h3>
              <df-grid class="list h4" label="Projektversionen" .cols=${versionCols} .rows=${versionRows}></df-grid>
            </section>
          </div>
        </div>

        <aside class="actions">
          ${actions.map(([t, more]) => this.action(t, more))}
          <hr class="rule" />
          ${this.action("Aktionen", true)}
        </aside>
      </main>

      <nav class="areas">
        ${areas.map(([i, t]) => html`<button class=${classMap({ area: true, on: t === "Projekte" })}>${icon(i)}${t}</button>`)}
      </nav>
      <footer class="status">
        <span class="stat s"></span><span class="stat s"></span>
        <span class="stat">2K</span><span class="stat">0E</span><span class="stat">2D</span><span class="stat">3V</span>
        <span class="stat"></span><span class="stat l">Mandant: 1 swp-Bau GmbH</span>
      </footer>
    `;
  }

  private action(t: string, more: boolean) {
    return html`<button class="action">
      <span class="txt">${t}</span>
      <span class="arrow">${more ? html`<svg width="7" height="5" viewBox="0 0 7 5"><path d="M0 .5h7L3.500 4.500z"/></svg>` : nothing}</span>
    </button>`;
  }
}
